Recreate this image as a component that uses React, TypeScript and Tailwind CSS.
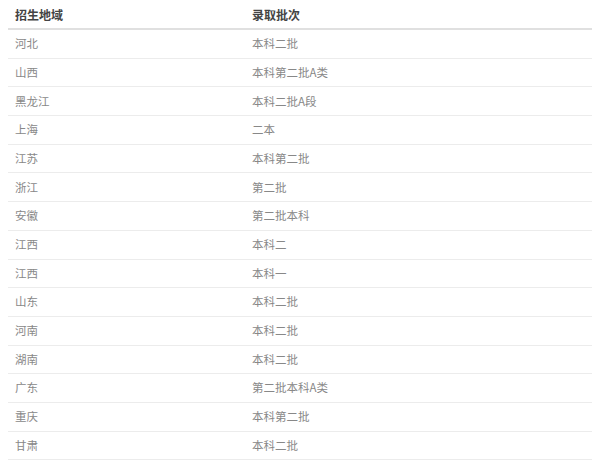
import React from "react";

const rows: [string, string][] = [
  ["河北", "本科二批"],
  ["山西", "本科第二批A类"],
  ["黑龙江", "本科二批A段"],
  ["上海", "二本"],
  ["江苏", "本科第二批"],
  ["浙江", "第二批"],
  ["安徽", "第二批本科"],
  ["江西", "本科二"],
  ["江西", "本科一"],
  ["山东", "本科二批"],
  ["河南", "本科二批"],
  ["湖南", "本科二批"],
  ["广东", "第二批本科A类"],
  ["重庆", "本科第二批"],
  ["甘肃", "本科二批"],
];

export default function App() {
  return (
    <div
      className="w-[600px] h-[461px] overflow-hidden bg-white px-[8px]"
      style={{ fontFamily: '"Noto Sans CJK SC", "Noto Sans", sans-serif' }}
    >
      <div className="flex h-[30px] items-center border-b-2 border-[#e0e0e0] text-[12px] font-bold text-[#444] pt-[2px]">
        <div className="w-[237px] pl-[7px]">招生地域</div>
        <div className="flex-1 pl-[7px]">录取批次</div>
      </div>
      {rows.map(([a, b], i) => (
        <div
          key={i}
          className="flex h-[28.7px] items-center border-b border-[#ececec] text-[11.5px] text-[#888]"
        >
          <div className="w-[237px] pl-[7px]">{a}</div>
          <div className="flex-1 pl-[7px]">{b}</div>
        </div>
      ))}
    </div>
  );
}
